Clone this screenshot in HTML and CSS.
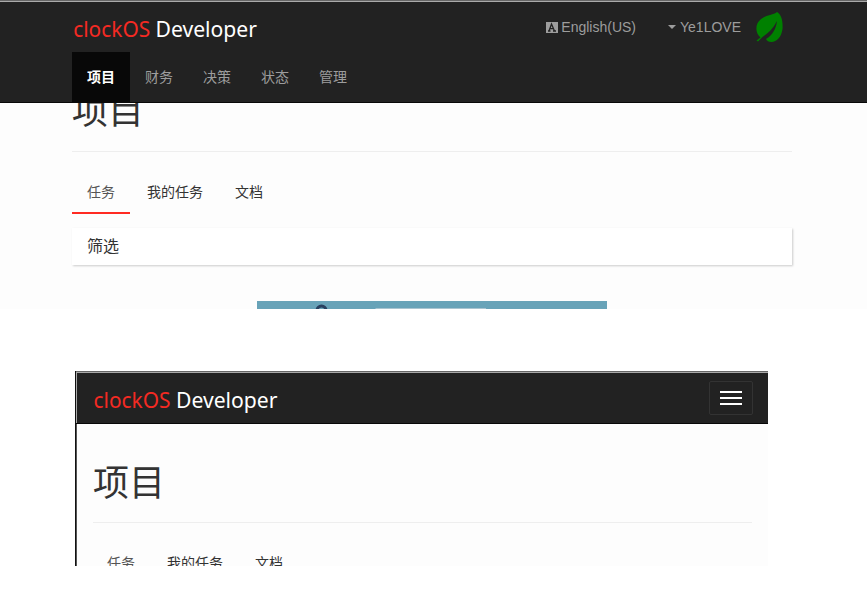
FILE: index.html
```html
<!DOCTYPE html>
<html lang="zh-CN">
<head>
<meta charset="utf-8">
<title>clockOS Developer</title>
<link rel="stylesheet" href="styles.css">
</head>
<body>
<section class="wide">
  <header class="navbar">
    <div class="top-row">
      <svg class="logo" width="190" height="34" viewBox="0 0 190 34" role="img">
        <text class="logo-red" x="1.200" y="26.500" textLength="77" lengthAdjust="spacingAndGlyphs">clockOS</text>
        <text class="logo-white" x="83.500" y="26.500" textLength="101.500" lengthAdjust="spacingAndGlyphs">Developer</text>
      </svg>
      <div class="account">
        <a class="language"><svg width="12" height="11" viewBox="0 0 12 11"><path fill="#9d9d9d" d="M0 0h12v11H0z"/><path fill="none" stroke="#222" stroke-width="1.3" d="M2 9h2.500M7 9h3M3 9l2.500-7L8.500 9M4 6.700h3.500"/></svg>English(US)</a>
        <a class="user"><i class="caret"></i>Ye1LOVE</a>
        <svg class="leaf" width="28" height="32" viewBox="0 0 28 32"><path fill="#008000" d="M21 1C25.500 3.500 27 10 26.500 18 25.500 26 20.500 31 15.500 31 12.500 31 11 30 10 28 16.500 24 20 18 21 10 17.500 17 12.500 22 6.500 26L2 30.500 .500 29.500 4.500 26.500C-1 22 -1 13 4.500 8.500 9.500 4 17.500 4 21 1Z"/></svg>
      </div>
    </div>
    <nav class="main-nav"><a class="active">项目</a><a>财务</a><a>决策</a><a>状态</a><a>管理</a></nav>
  </header>
  <main class="content">
    <h1>项目</h1>
    <nav class="tabs"><a class="current">任务</a><a>我的任务</a><a>文档</a></nav>
    <div class="filter">筛选</div>
    <svg class="banner" width="350" height="8" viewBox="0 0 350 8"><path fill="#68a3b8" d="M0 0h350v8H0z"/><circle cx="64.500" cy="9.500" r="4.500" fill="none" stroke="#29405f" stroke-width="3"/><path fill="#a9c4d0" d="M119 7h110v1H118z"/></svg>
  </main>
</section>
<section class="narrow">
  <header class="mobile-bar">
    <svg class="logo" width="190" height="34" viewBox="0 0 190 34" role="img">
      <text class="logo-red" x="0.500" y="26.500" textLength="77" lengthAdjust="spacingAndGlyphs">clockOS</text>
      <text class="logo-white" x="83" y="26.500" textLength="101.500" lengthAdjust="spacingAndGlyphs">Developer</text>
    </svg>
    <button class="toggle"><i></i><i></i><i></i></button>
  </header>
  <main class="mobile-content">
    <h1>项目</h1>
    <nav class="tabs"><a class="current">任务</a><a>我的任务</a><a>文档</a></nav>
  </main>
</section>
</body>
</html>
```
FILE: styles.css
```css
* { box-sizing: border-box; }
body {
  margin: 0;
  height: 609px;
  overflow: hidden;
  background: #fff;
  color: #333;
  font: 14px/20px "Liberation Sans", "Noto Sans CJK SC", sans-serif;
}
h1 {
  margin: 0;
  border-bottom: 1px solid #eee;
  font-size: 36px;
  line-height: 40px;
  font-weight: 400;
}
.wide {
  height: 309px;
  overflow: hidden;
  background: #fdfdfd;
}
.navbar {
  position: relative;
  height: 103px;
  padding: 0 75px 0 72px;
  background: #222;
  border-top: 1px solid #666;
  border-bottom: 1px solid #080808;
  box-shadow: inset 0 1px #aaa;
}
.top-row {
  display: flex;
  height: 51px;
  padding-top: 9px;
  justify-content: space-between;
}
.logo { display: block; flex: none; }
.logo text { font: 22px "Noto Sans", sans-serif; }
.logo-red { fill: #f42a23; }
.logo-white { fill: #fff; }
.account {
  display: flex;
  height: 34px;
  align-items: center;
  color: #9d9d9d;
}
.account a { display: flex; align-items: center; }
.language { gap: 3px; margin-right: 32px; }
.user { gap: 4px; margin-right: 15px; }
.caret {
  border: 4px solid transparent;
  border-top-color: #9d9d9d;
  border-bottom: 0;
}
.leaf { margin-right: 8px; }
.main-nav { display: flex; }
.main-nav a { height: 50px; padding: 15px; color: #9d9d9d; }
.main-nav .active { background: #080808; color: #fff; font-weight: 700; }
.content { width: 720px; margin-left: 72px; }
.content h1 { height: 60px; margin-top: -11px; }
.tabs { display: flex; gap: 2px; margin-top: 20px; }
.tabs a { height: 42px; padding: 10px 15px; border-bottom: 2px solid transparent; }
.tabs .current { color: #555; border-color: #ff2a22; }
.filter {
  height: 37px;
  margin-top: 14px;
  padding: 9px 15px;
  background: #fff;
  box-shadow: 1px 1px 2px rgba(0, 0, 0, .2);
  font-size: 16px;
}
.banner { display: block; margin: 36px 0 0 185px; }
.narrow {
  width: 693px;
  height: 195px;
  margin: 62px 0 0 75px;
  overflow: hidden;
  background: #fdfdfd;
  border-left: 1px solid #111;
}
.mobile-bar {
  display: flex;
  height: 53px;
  padding: 9px 15px 0 17px;
  justify-content: space-between;
  background: #222;
  border-top: 1px solid #666;
  border-bottom: 1px solid #080808;
  box-shadow: inset 1px 1px #aaa;
}
.toggle {
  display: flex;
  flex-direction: column;
  width: 44px;
  height: 34px;
  padding: 9px 10px;
  gap: 4px;
  background: none;
  border: 1px solid #333;
  border-radius: 2px;
}
.toggle i { width: 22px; height: 2px; background: #fff; }
.mobile-content {
  height: 142px;
  padding: 40px 16px 0;
  border-left: 1px solid #555;
}
.mobile-content h1 { height: 59px; }
.mobile-content .tabs { margin-left: -1px; }
```
